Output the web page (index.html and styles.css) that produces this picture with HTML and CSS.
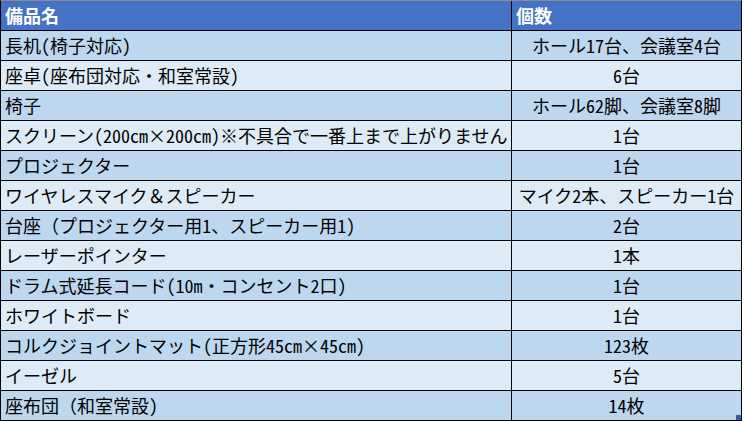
FILE: index.html
```html
<!DOCTYPE html>
<html lang="ja">
<head>
<meta charset="utf-8">
<title>備品一覧</title>
<link rel="stylesheet" href="styles.css">
</head>
<body>
<div class="sheet">
  <div class="cell head name">備品名</div>
  <div class="cell head qty">個数</div>

  <div class="cell dark name">長机(椅子対応)</div>
  <div class="cell dark qty">ホール17台、会議室4台</div>

  <div class="cell light name">座卓(座布団対応・和室常設)</div>
  <div class="cell light qty">6台</div>

  <div class="cell dark name">椅子</div>
  <div class="cell dark qty">ホール62脚、会議室8脚</div>

  <div class="cell light name">スクリーン(200cm<span class="fw">×</span>200cm)※不具合で一番上まで上がりません</div>
  <div class="cell light qty">1台</div>

  <div class="cell dark name">プロジェクター</div>
  <div class="cell dark qty">1台</div>

  <div class="cell light name">ワイヤレスマイク<span class="fw">＆</span>スピーカー</div>
  <div class="cell light qty">マイク2本、スピーカー1台</div>

  <div class="cell dark name">台座<span class="fw">（</span>プロジェクター用1、スピーカー用1)</div>
  <div class="cell dark qty">2台</div>

  <div class="cell light name">レーザーポインター</div>
  <div class="cell light qty">1本</div>

  <div class="cell dark name">ドラム式延長コード(10m・コンセント2口)</div>
  <div class="cell dark qty">1台</div>

  <div class="cell light name">ホワイトボード</div>
  <div class="cell light qty">1台</div>

  <div class="cell dark name">コルクジョイントマット(正方形45cm<span class="fw">×</span>45cm)</div>
  <div class="cell dark qty">123枚</div>

  <div class="cell light name">イーゼル</div>
  <div class="cell light qty">5台</div>

  <div class="cell dark name">座布団<span class="fw">（</span>和室常設)</div>
  <div class="cell dark qty">14枚</div>

  <span class="handle"></span>
</div>
</body>
</html>
```

FILE: styles.css
```css
html, body {
  margin: 0;
  padding: 0;
  background: #ffffff;
}

.sheet {
  position: relative;
  box-sizing: border-box;
  width: 742px;
  display: grid;
  grid-template-columns: 511px 1fr;
  border-top: 1px solid #8c8c8c;
  border-left: 1px solid #000000;
  border-right: 1px solid #000000;
  font-family: "Noto Sans CJK JP", "Noto Sans", sans-serif;
  font-size: 18px;
  font-feature-settings: "hwid" 1;
  color: #000000;
}

.cell {
  height: 29px;
  line-height: 29px;
  border-bottom: 1px solid #000000;
  white-space: nowrap;
  overflow: hidden;
}

.fw {
  font-feature-settings: normal;
}

.name {
  padding-left: 4px;
  border-right: 1px solid #000000;
}

.qty {
  text-align: center;
}

.head {
  background: #4472c4;
  color: #ffffff;
  font-weight: bold;
}

.head.qty {
  text-align: left;
  padding-left: 4px;
}

.dark {
  background: #bdd7ee;
}

.light {
  background: #ddebf7;
}

.handle {
  position: absolute;
  right: 0;
  bottom: 1px;
  width: 5px;
  height: 5px;
  background: #3a5ab0;
}
```
